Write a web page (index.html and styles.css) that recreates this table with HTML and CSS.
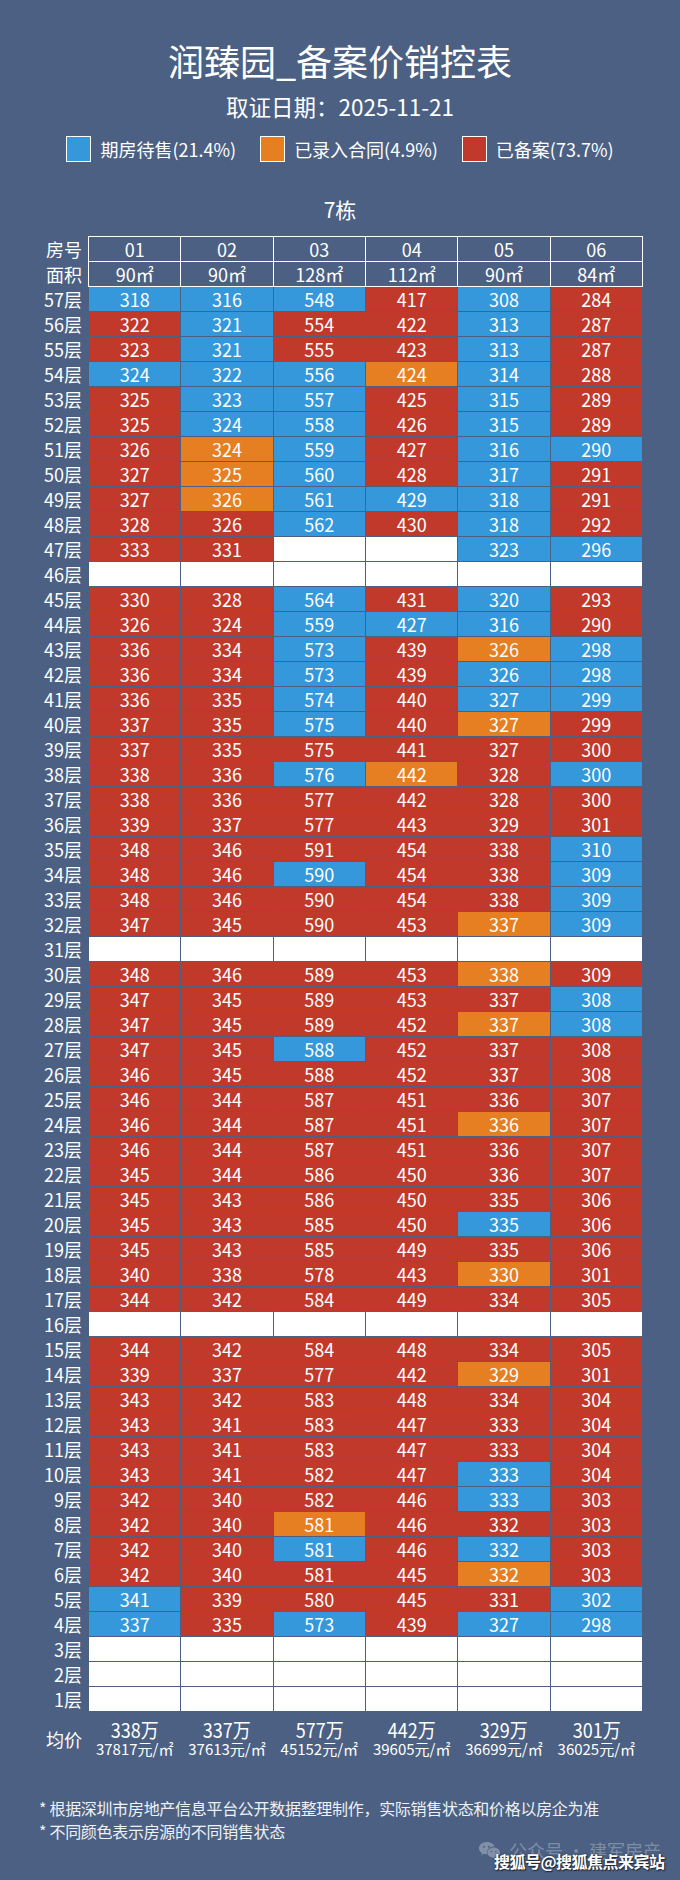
FILE: index.html
```html
<!DOCTYPE html>
<html lang="zh-CN">
<head>
<meta charset="utf-8">
<title>润臻园_备案价销控表</title>
<link rel="stylesheet" href="styles.css">
</head>
<body>
<div class="page">
  <h1 class="title">润臻园_备案价销控表</h1>
  <div class="date">取证日期：2025-11-21</div>
  <div class="legend">
    <div class="legend-item"><span class="swatch b"></span>期房待售(21.4%)</div>
    <div class="legend-item"><span class="swatch o"></span>已录入合同(4.9%)</div>
    <div class="legend-item"><span class="swatch r"></span>已备案(73.7%)</div>
  </div>
  <div class="bldg">7栋</div>

  <div class="sheet">
    <div class="head">
      <div class="head-labels"><div>房号</div><div>面积</div></div>
      <div class="head-grid">
        <span>01</span><span>02</span><span>03</span><span>04</span><span>05</span><span>06</span>
        <span>90㎡</span><span>90㎡</span><span>128㎡</span><span>112㎡</span><span>90㎡</span><span>84㎡</span>
      </div>
    </div>

    <div class="row"><div class="floor">57层</div><div class="cells"><span class="b">318</span><span class="b">316</span><span class="b">548</span><span class="r">417</span><span class="b">308</span><span class="r">284</span></div></div>
    <div class="row"><div class="floor">56层</div><div class="cells"><span class="r">322</span><span class="b">321</span><span class="r">554</span><span class="r">422</span><span class="b">313</span><span class="r">287</span></div></div>
    <div class="row"><div class="floor">55层</div><div class="cells"><span class="r">323</span><span class="b">321</span><span class="r">555</span><span class="r">423</span><span class="b">313</span><span class="r">287</span></div></div>
    <div class="row"><div class="floor">54层</div><div class="cells"><span class="b">324</span><span class="b">322</span><span class="b">556</span><span class="o">424</span><span class="b">314</span><span class="r">288</span></div></div>
    <div class="row"><div class="floor">53层</div><div class="cells"><span class="r">325</span><span class="b">323</span><span class="b">557</span><span class="r">425</span><span class="b">315</span><span class="r">289</span></div></div>
    <div class="row"><div class="floor">52层</div><div class="cells"><span class="r">325</span><span class="b">324</span><span class="b">558</span><span class="r">426</span><span class="b">315</span><span class="r">289</span></div></div>
    <div class="row"><div class="floor">51层</div><div class="cells"><span class="r">326</span><span class="o">324</span><span class="b">559</span><span class="r">427</span><span class="b">316</span><span class="b">290</span></div></div>
    <div class="row"><div class="floor">50层</div><div class="cells"><span class="r">327</span><span class="o">325</span><span class="b">560</span><span class="r">428</span><span class="b">317</span><span class="r">291</span></div></div>
    <div class="row"><div class="floor">49层</div><div class="cells"><span class="r">327</span><span class="o">326</span><span class="b">561</span><span class="b">429</span><span class="b">318</span><span class="r">291</span></div></div>
    <div class="row"><div class="floor">48层</div><div class="cells"><span class="r">328</span><span class="r">326</span><span class="b">562</span><span class="r">430</span><span class="b">318</span><span class="r">292</span></div></div>
    <div class="row"><div class="floor">47层</div><div class="cells"><span class="r">333</span><span class="r">331</span><span class="w"></span><span class="w"></span><span class="b">323</span><span class="b">296</span></div></div>
    <div class="row"><div class="floor">46层</div><div class="cells"><span class="w"></span><span class="w"></span><span class="w"></span><span class="w"></span><span class="w"></span><span class="w"></span></div></div>
    <div class="row"><div class="floor">45层</div><div class="cells"><span class="r">330</span><span class="r">328</span><span class="b">564</span><span class="r">431</span><span class="b">320</span><span class="r">293</span></div></div>
    <div class="row"><div class="floor">44层</div><div class="cells"><span class="r">326</span><span class="r">324</span><span class="b">559</span><span class="b">427</span><span class="b">316</span><span class="r">290</span></div></div>
    <div class="row"><div class="floor">43层</div><div class="cells"><span class="r">336</span><span class="r">334</span><span class="b">573</span><span class="r">439</span><span class="o">326</span><span class="b">298</span></div></div>
    <div class="row"><div class="floor">42层</div><div class="cells"><span class="r">336</span><span class="r">334</span><span class="b">573</span><span class="r">439</span><span class="b">326</span><span class="b">298</span></div></div>
    <div class="row"><div class="floor">41层</div><div class="cells"><span class="r">336</span><span class="r">335</span><span class="b">574</span><span class="r">440</span><span class="b">327</span><span class="b">299</span></div></div>
    <div class="row"><div class="floor">40层</div><div class="cells"><span class="r">337</span><span class="r">335</span><span class="b">575</span><span class="r">440</span><span class="o">327</span><span class="r">299</span></div></div>
    <div class="row"><div class="floor">39层</div><div class="cells"><span class="r">337</span><span class="r">335</span><span class="r">575</span><span class="r">441</span><span class="r">327</span><span class="r">300</span></div></div>
    <div class="row"><div class="floor">38层</div><div class="cells"><span class="r">338</span><span class="r">336</span><span class="b">576</span><span class="o">442</span><span class="r">328</span><span class="b">300</span></div></div>
    <div class="row"><div class="floor">37层</div><div class="cells"><span class="r">338</span><span class="r">336</span><span class="r">577</span><span class="r">442</span><span class="r">328</span><span class="r">300</span></div></div>
    <div class="row"><div class="floor">36层</div><div class="cells"><span class="r">339</span><span class="r">337</span><span class="r">577</span><span class="r">443</span><span class="r">329</span><span class="r">301</span></div></div>
    <div class="row"><div class="floor">35层</div><div class="cells"><span class="r">348</span><span class="r">346</span><span class="r">591</span><span class="r">454</span><span class="r">338</span><span class="b">310</span></div></div>
    <div class="row"><div class="floor">34层</div><div class="cells"><span class="r">348</span><span class="r">346</span><span class="b">590</span><span class="r">454</span><span class="r">338</span><span class="b">309</span></div></div>
    <div class="row"><div class="floor">33层</div><div class="cells"><span class="r">348</span><span class="r">346</span><span class="r">590</span><span class="r">454</span><span class="r">338</span><span class="b">309</span></div></div>
    <div class="row"><div class="floor">32层</div><div class="cells"><span class="r">347</span><span class="r">345</span><span class="r">590</span><span class="r">453</span><span class="o">337</span><span class="b">309</span></div></div>
    <div class="row"><div class="floor">31层</div><div class="cells"><span class="w"></span><span class="w"></span><span class="w"></span><span class="w"></span><span class="w"></span><span class="w"></span></div></div>
    <div class="row"><div class="floor">30层</div><div class="cells"><span class="r">348</span><span class="r">346</span><span class="r">589</span><span class="r">453</span><span class="o">338</span><span class="r">309</span></div></div>
    <div class="row"><div class="floor">29层</div><div class="cells"><span class="r">347</span><span class="r">345</span><span class="r">589</span><span class="r">453</span><span class="r">337</span><span class="b">308</span></div></div>
    <div class="row"><div class="floor">28层</div><div class="cells"><span class="r">347</span><span class="r">345</span><span class="r">589</span><span class="r">452</span><span class="o">337</span><span class="b">308</span></div></div>
    <div class="row"><div class="floor">27层</div><div class="cells"><span class="r">347</span><span class="r">345</span><span class="b">588</span><span class="r">452</span><span class="r">337</span><span class="r">308</span></div></div>
    <div class="row"><div class="floor">26层</div><div class="cells"><span class="r">346</span><span class="r">345</span><span class="r">588</span><span class="r">452</span><span class="r">337</span><span class="r">308</span></div></div>
    <div class="row"><div class="floor">25层</div><div class="cells"><span class="r">346</span><span class="r">344</span><span class="r">587</span><span class="r">451</span><span class="r">336</span><span class="r">307</span></div></div>
    <div class="row"><div class="floor">24层</div><div class="cells"><span class="r">346</span><span class="r">344</span><span class="r">587</span><span class="r">451</span><span class="o">336</span><span class="r">307</span></div></div>
    <div class="row"><div class="floor">23层</div><div class="cells"><span class="r">346</span><span class="r">344</span><span class="r">587</span><span class="r">451</span><span class="r">336</span><span class="r">307</span></div></div>
    <div class="row"><div class="floor">22层</div><div class="cells"><span class="r">345</span><span class="r">344</span><span class="r">586</span><span class="r">450</span><span class="r">336</span><span class="r">307</span></div></div>
    <div class="row"><div class="floor">21层</div><div class="cells"><span class="r">345</span><span class="r">343</span><span class="r">586</span><span class="r">450</span><span class="r">335</span><span class="r">306</span></div></div>
    <div class="row"><div class="floor">20层</div><div class="cells"><span class="r">345</span><span class="r">343</span><span class="r">585</span><span class="r">450</span><span class="b">335</span><span class="r">306</span></div></div>
    <div class="row"><div class="floor">19层</div><div class="cells"><span class="r">345</span><span class="r">343</span><span class="r">585</span><span class="r">449</span><span class="r">335</span><span class="r">306</span></div></div>
    <div class="row"><div class="floor">18层</div><div class="cells"><span class="r">340</span><span class="r">338</span><span class="r">578</span><span class="r">443</span><span class="o">330</span><span class="r">301</span></div></div>
    <div class="row"><div class="floor">17层</div><div class="cells"><span class="r">344</span><span class="r">342</span><span class="r">584</span><span class="r">449</span><span class="r">334</span><span class="r">305</span></div></div>
    <div class="row"><div class="floor">16层</div><div class="cells"><span class="w"></span><span class="w"></span><span class="w"></span><span class="w"></span><span class="w"></span><span class="w"></span></div></div>
    <div class="row"><div class="floor">15层</div><div class="cells"><span class="r">344</span><span class="r">342</span><span class="r">584</span><span class="r">448</span><span class="r">334</span><span class="r">305</span></div></div>
    <div class="row"><div class="floor">14层</div><div class="cells"><span class="r">339</span><span class="r">337</span><span class="r">577</span><span class="r">442</span><span class="o">329</span><span class="r">301</span></div></div>
    <div class="row"><div class="floor">13层</div><div class="cells"><span class="r">343</span><span class="r">342</span><span class="r">583</span><span class="r">448</span><span class="r">334</span><span class="r">304</span></div></div>
    <div class="row"><div class="floor">12层</div><div class="cells"><span class="r">343</span><span class="r">341</span><span class="r">583</span><span class="r">447</span><span class="r">333</span><span class="r">304</span></div></div>
    <div class="row"><div class="floor">11层</div><div class="cells"><span class="r">343</span><span class="r">341</span><span class="r">583</span><span class="r">447</span><span class="r">333</span><span class="r">304</span></div></div>
    <div class="row"><div class="floor">10层</div><div class="cells"><span class="r">343</span><span class="r">341</span><span class="r">582</span><span class="r">447</span><span class="b">333</span><span class="r">304</span></div></div>
    <div class="row"><div class="floor">9层</div><div class="cells"><span class="r">342</span><span class="r">340</span><span class="r">582</span><span class="r">446</span><span class="b">333</span><span class="r">303</span></div></div>
    <div class="row"><div class="floor">8层</div><div class="cells"><span class="r">342</span><span class="r">340</span><span class="o">581</span><span class="r">446</span><span class="r">332</span><span class="r">303</span></div></div>
    <div class="row"><div class="floor">7层</div><div class="cells"><span class="r">342</span><span class="r">340</span><span class="b">581</span><span class="r">446</span><span class="b">332</span><span class="r">303</span></div></div>
    <div class="row"><div class="floor">6层</div><div class="cells"><span class="r">342</span><span class="r">340</span><span class="r">581</span><span class="r">445</span><span class="o">332</span><span class="r">303</span></div></div>
    <div class="row"><div class="floor">5层</div><div class="cells"><span class="b">341</span><span class="r">339</span><span class="r">580</span><span class="r">445</span><span class="r">331</span><span class="b">302</span></div></div>
    <div class="row"><div class="floor">4层</div><div class="cells"><span class="b">337</span><span class="r">335</span><span class="b">573</span><span class="r">439</span><span class="b">327</span><span class="b">298</span></div></div>
    <div class="row"><div class="floor">3层</div><div class="cells"><span class="w"></span><span class="w"></span><span class="w"></span><span class="w"></span><span class="w"></span><span class="w"></span></div></div>
    <div class="row"><div class="floor">2层</div><div class="cells"><span class="w"></span><span class="w"></span><span class="w"></span><span class="w"></span><span class="w"></span><span class="w"></span></div></div>
    <div class="row"><div class="floor">1层</div><div class="cells"><span class="w"></span><span class="w"></span><span class="w"></span><span class="w"></span><span class="w"></span><span class="w"></span></div></div>

    <div class="avg">
      <div class="avg-label">均价</div>
      <div class="avg-grid">
        <div class="avg-cell"><span class="wan">338万</span><span class="unit">37817元/㎡</span></div>
        <div class="avg-cell"><span class="wan">337万</span><span class="unit">37613元/㎡</span></div>
        <div class="avg-cell"><span class="wan">577万</span><span class="unit">45152元/㎡</span></div>
        <div class="avg-cell"><span class="wan">442万</span><span class="unit">39605元/㎡</span></div>
        <div class="avg-cell"><span class="wan">329万</span><span class="unit">36699元/㎡</span></div>
        <div class="avg-cell"><span class="wan">301万</span><span class="unit">36025元/㎡</span></div>
      </div>
    </div>
  </div>

  <div class="notes">
    <p>* 根据深圳市房地产信息平台公开数据整理制作，实际销售状态和价格以房企为准</p>
    <p>* 不同颜色表示房源的不同销售状态</p>
  </div>

  <div class="wm">
    <svg class="wm-icon" viewBox="0 0 24 22" width="23" height="21" aria-hidden="true">
      <path d="M9 2C4.6 2 1 5 1 8.6c0 2 1.1 3.8 2.9 5l-.7 2.3 2.7-1.4c1 .3 2 .5 3.1.5h.6a5.8 5.8 0 0 1-.3-1.8c0-3.6 3.4-6.4 7.6-6.4h.5C16.6 4.1 13.2 2 9 2z" fill="currentColor"/>
      <path d="M23 13.2c0-3-3-5.4-6.6-5.4s-6.6 2.4-6.6 5.4 3 5.4 6.6 5.4c.8 0 1.6-.1 2.300-.4l2.1 1.1-.6-1.8c1.7-1 2.8-2.5 2.8-4.3z" fill="currentColor"/>
      <circle cx="6.2" cy="7" r="1" fill="#4b6082"/>
      <circle cx="11.4" cy="7" r="1" fill="#4b6082"/>
      <circle cx="14.2" cy="12" r=".8" fill="#4b6082"/>
      <circle cx="18.6" cy="12" r=".8" fill="#4b6082"/>
    </svg>
    <span>公众号 · 建军房产</span>
  </div>
  <div class="sohu">搜狐号@搜狐焦点来宾站</div>
</div>
</body>
</html>
```

FILE: styles.css
```css
* { box-sizing: content-box; }

body {
  margin: 0;
  background: #4b6082;
  color: #ffffff;
  font-family: "Noto Sans CJK SC", "Noto Sans", "Liberation Sans", sans-serif;
}

.page {
  position: relative;
  width: 680px;
  height: 1880px;
  overflow: hidden;
}

.title {
  margin: 38px 0 0;
  text-align: center;
  font-size: 36px;
  line-height: 44px;
  font-weight: 400;
}

.date {
  margin-top: 9px;
  text-align: center;
  font-size: 22.5px;
  line-height: 30px;
}

.legend {
  margin-top: 15px;
  display: flex;
  justify-content: center;
  gap: 24px;
  height: 26px;
}

.legend-item {
  display: flex;
  align-items: center;
  gap: 9px;
  font-size: 18px;
  line-height: 26px;
}

.swatch {
  display: block;
  width: 23px;
  height: 24px;
  border: 1px solid #ffffff;
}

.b { background: #3498db; }
.o { background: #e67e22; }
.r { background: #c0392b; }
.w { background: #ffffff; }

.bldg {
  margin-top: 33px;
  text-align: center;
  font-size: 21px;
  line-height: 28px;
}

.sheet {
  margin-top: 13px;
}

.head {
  display: flex;
}

.head-labels {
  width: 82px;
  margin-right: 6px;
  padding-top: 1px;
}

.head-labels div {
  height: 25px;
  line-height: 24px;
  text-align: right;
  font-size: 18px;
}

.head-grid {
  width: 553px;
  padding: 1px;
  background: #ffffff;
  display: grid;
  grid-template-columns: repeat(6, 1fr);
  grid-template-rows: 24px 24px;
  gap: 1px;
}

.head-grid span {
  background: #4b6082;
  text-align: center;
  font-size: 18px;
  line-height: 24px;
}

.row {
  display: flex;
  height: 24px;
  margin-bottom: 1px;
}

.floor {
  width: 82px;
  margin-right: 7px;
  text-align: right;
  font-size: 18px;
  line-height: 24px;
}

.cells {
  width: 553px;
  display: grid;
  grid-template-columns: repeat(6, 1fr);
  gap: 1px;
}

.cells span {
  text-align: center;
  font-size: 18px;
  line-height: 24px;
  color: #ffffff;
}

.avg {
  display: flex;
  align-items: center;
  margin-top: 9px;
}

.avg-label {
  width: 82px;
  margin-right: 7px;
  text-align: right;
  font-size: 18px;
  line-height: 24px;
}

.avg-grid {
  width: 553px;
  display: grid;
  grid-template-columns: repeat(6, 1fr);
  gap: 1px;
}

.avg-cell {
  display: flex;
  flex-direction: column;
  align-items: center;
}

.wan {
  display: block;
  font-size: 20px;
  line-height: 20px;
  transform: scaleX(0.9);
}

.unit {
  display: block;
  font-size: 15px;
  line-height: 17px;
  white-space: nowrap;
}

.notes {
  margin-top: 40px;
  padding-left: 39px;
  font-size: 16px;
  line-height: 23px;
  letter-spacing: -0.3px;
  color: #eef1f5;
}

.notes p {
  margin: 0;
}

.wm {
  position: absolute;
  left: 478px;
  top: 1838px;
  display: flex;
  align-items: center;
  gap: 8px;
  color: rgba(255, 255, 255, 0.3);
  font-size: 18px;
  line-height: 24px;
  white-space: nowrap;
}

.wm-icon {
  display: block;
}

.sohu {
  position: absolute;
  left: 494px;
  top: 1850px;
  font-size: 16px;
  line-height: 22px;
  font-weight: 700;
  letter-spacing: -0.5px;
  color: #ffffff;
  white-space: nowrap;
  text-shadow: 1px 1px 1px #1e2533, 0 0 2px #1e2533;
}
```
